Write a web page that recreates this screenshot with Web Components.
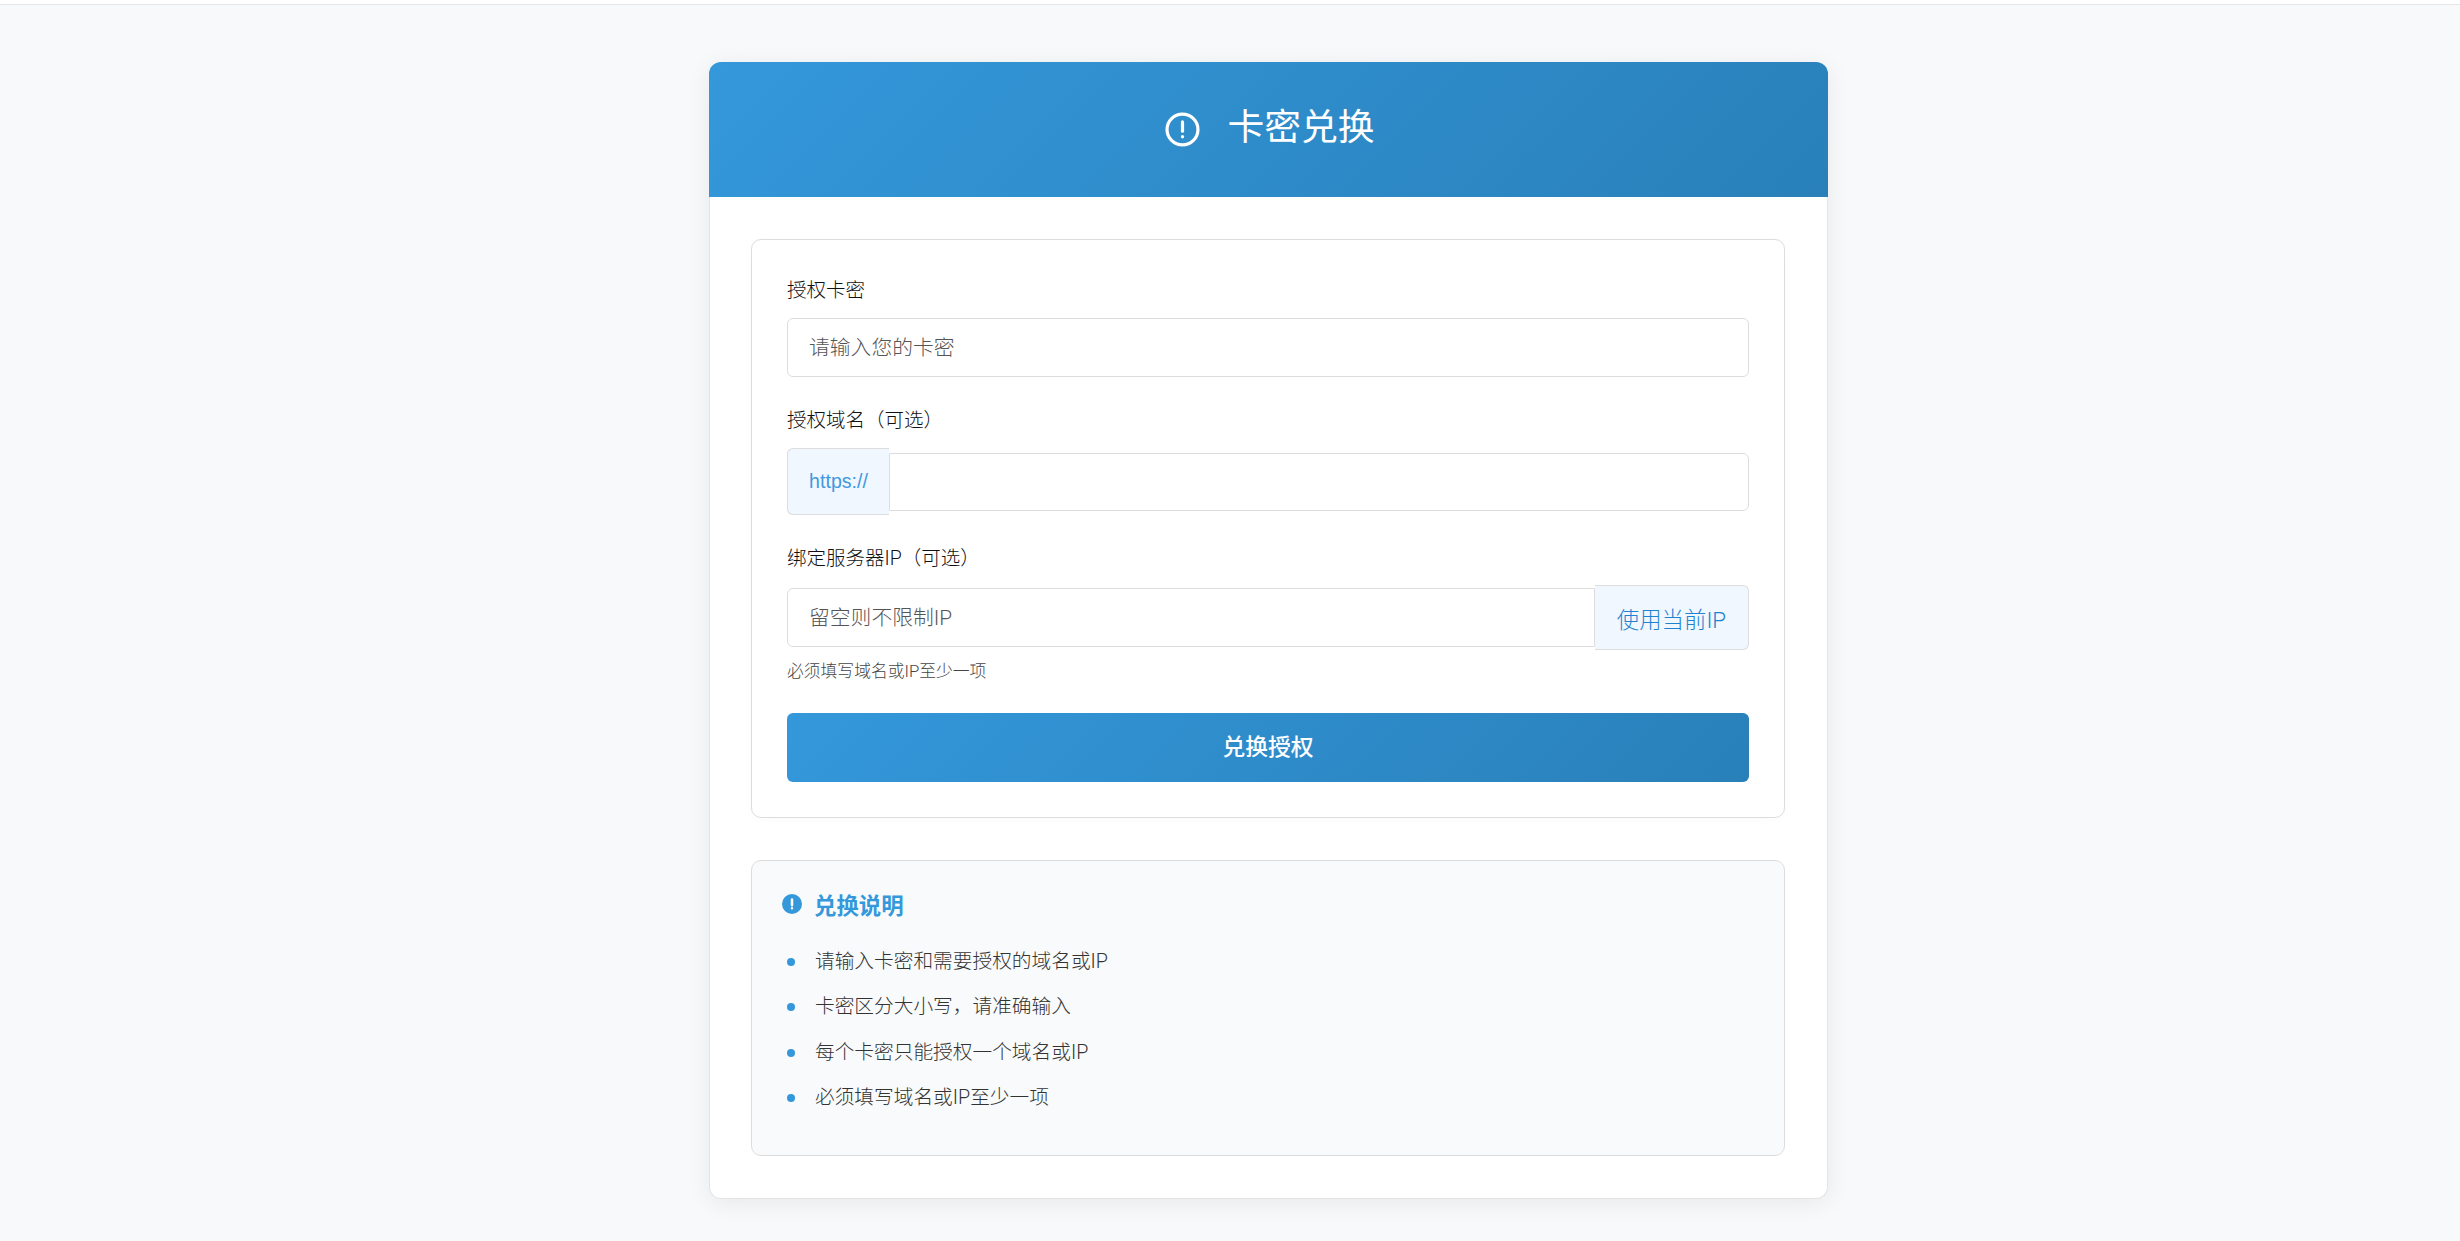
<!DOCTYPE html>
<html lang="zh-CN"><head><meta charset="utf-8"><title>卡密兑换</title>
<style>
html,body{margin:0;padding:0}
body{background:#f8f9fa;font-family:Roboto,"Noto Sans CJK SC",sans-serif;color:#333;min-height:1241px;overflow:hidden}
</style></head><body>
<top-line></top-line>
<redeem-page>
  <redeem-card heading="卡密兑换">
    <redeem-form></redeem-form>
    <info-box heading="兑换说明">
      <li>请输入卡密和需要授权的域名或IP</li>
      <li>卡密区分大小写，请准确输入</li>
      <li>每个卡密只能授权一个域名或IP</li>
      <li>必须填写域名或IP至少一项</li>
    </info-box>
  </redeem-card>
</redeem-page>
<script>
const alertStroke='<svg viewBox="0 0 24 24" width="100%" height="100%" fill="none" stroke="currentColor" stroke-width="2.2" stroke-linecap="round"><circle cx="12" cy="12" r="10.6"/><path d="M12 6.8v6.4"/><path d="M12 16.8v.2"/></svg>';
const alertSolid='<svg viewBox="0 0 24 24" width="100%" height="100%"><circle cx="12" cy="12" r="12" fill="currentColor"/><path d="M12 6.5v7M12 17v.2" stroke="#fff" stroke-width="3" stroke-linecap="round" fill="none"/></svg>';
function def(name,css,html){
  customElements.define(name,class extends HTMLElement{
    constructor(){super();const r=this.attachShadow({mode:'open'});
      r.innerHTML='<style>'+css+'</style>'+(typeof html==='function'?'':html);}
    connectedCallback(){
      if(typeof html==='function'){this.shadowRoot.innerHTML='<style>'+css+'</style>'+html(this);}
    }
  });
}
def('top-line',':host{display:block;height:5px;background:#fff;border-bottom:1px solid #e6e6e6;box-sizing:border-box}','');
def('redeem-page',':host{display:flex;justify-content:flex-start;padding:57px 0 0 709px}','<slot></slot>');
def('redeem-card',`
:host{display:block;width:1119px;background:#fff;border-radius:12px;box-sizing:border-box;box-shadow:0 4px 24px rgba(0,0,0,.07);border:1px solid #e4e4e4;border-top:0}
header{height:135px;background:linear-gradient(135deg,#3498db,#2980b9);border-radius:12px 12px 0 0;margin:0 -1px;display:flex;align-items:center;justify-content:center;gap:27px;color:#fff;padding-left:3px;box-sizing:border-box}
.ic{width:35px;height:35px;display:block;margin-top:-1px}
h1{margin:-10px 0 0;font:400 36.8px/1 "Noto Sans CJK SC",sans-serif}
.body{padding:42px 42px 42px 41px;display:flex;flex-direction:column;gap:42px}
`,el=>`<header><span class="ic">${alertStroke}</span><h1>${el.getAttribute('heading')||''}</h1></header><div class="body"><slot></slot></div>`);
def('redeem-form',`
:host{display:block;background:#fff;border:1px solid #ddd;border-radius:10px;padding:38px 35px 35px;box-sizing:border-box;box-shadow:0 2px 12px rgba(0,0,0,.02)}
*{box-sizing:border-box}
label{display:block;font:300 19.5px/26px Roboto,"Noto Sans CJK SC",sans-serif;color:#111;margin-bottom:14px}
.grp{margin-bottom:31px}
.row{display:flex;align-items:center}
input{display:block;flex:1;min-width:0;width:100%;height:59px;border:1px solid #ddd;border-radius:6px;padding:0 21px 0;font:300 20.8px Roboto,"Noto Sans CJK SC",sans-serif;color:#333;background:#fff;outline:0}
input::placeholder{color:#555}
.pre{width:102px;height:67px;display:flex;align-items:center;justify-content:center;background:#f0f7ff;border:1px solid #ddd;border-right:0;border-radius:6px 0 0 6px;color:#4299dd;font:400 19.6px "Liberation Sans",sans-serif}
.pre+input{border-radius:0 6px 6px 0;height:58px}
.row button{width:154px;height:65px;flex:none;background:#f0f7ff;border:1px solid #ddd;border-left:0;border-radius:0 6px 6px 0;color:#1f82cf;font:300 22.4px Roboto,"Noto Sans CJK SC",sans-serif;padding:0}
.ipinput{border-radius:6px 0 0 6px}
.note{font:300 16.8px/20px Roboto,"Noto Sans CJK SC",sans-serif;color:#444;margin-top:11px}
.submit{display:block;width:100%;height:69px;margin-top:32px;border:0;border-radius:6px;background:linear-gradient(135deg,#3498db,#2980b9);color:#fff;font:500 22.8px/1 "Noto Sans CJK SC",sans-serif;padding:0 0 3px}
`,`<div class="grp"><label>授权卡密</label><input placeholder="请输入您的卡密"></div>
<div class="grp"><label>授权域名（可选）</label><div class="row"><span class="pre">https://</span><input></div></div>
<div><label style="margin-bottom:13px">绑定服务器IP（可选）</label><div class="row"><input class="ipinput" placeholder="留空则不限制IP"><button>使用当前IP</button></div><div class="note">必须填写域名或IP至少一项</div></div>
<button class="submit">兑换授权</button>`);
def('info-box',`
:host{display:block;background:#f9fafb;border:1px solid #ddd;border-radius:10px;box-sizing:border-box;height:296px;padding:30px 30px 0 30px;font-weight:300}
.t{display:flex;align-items:center;gap:12px;color:#3498db;height:26px}
.ic{width:20px;height:20px;display:block;margin-top:0}
h2{margin:0;font:700 22.4px/26px "Noto Sans CJK SC",sans-serif}
ul{list-style:none;margin:22px 0 0;padding:0}
::slotted(li){display:block;position:relative;padding-left:33px;height:45.4px;line-height:45.4px;font-size:19.7px;color:#333}
::slotted(li)::before{content:"";position:absolute;left:5px;top:19px;width:8px;height:8px;border-radius:50%;background:#3498db}
`,el=>`<div class="t"><span class="ic">${alertSolid}</span><h2>${el.getAttribute('heading')||''}</h2></div><ul><slot></slot></ul>`);
</script>
</body></html>
